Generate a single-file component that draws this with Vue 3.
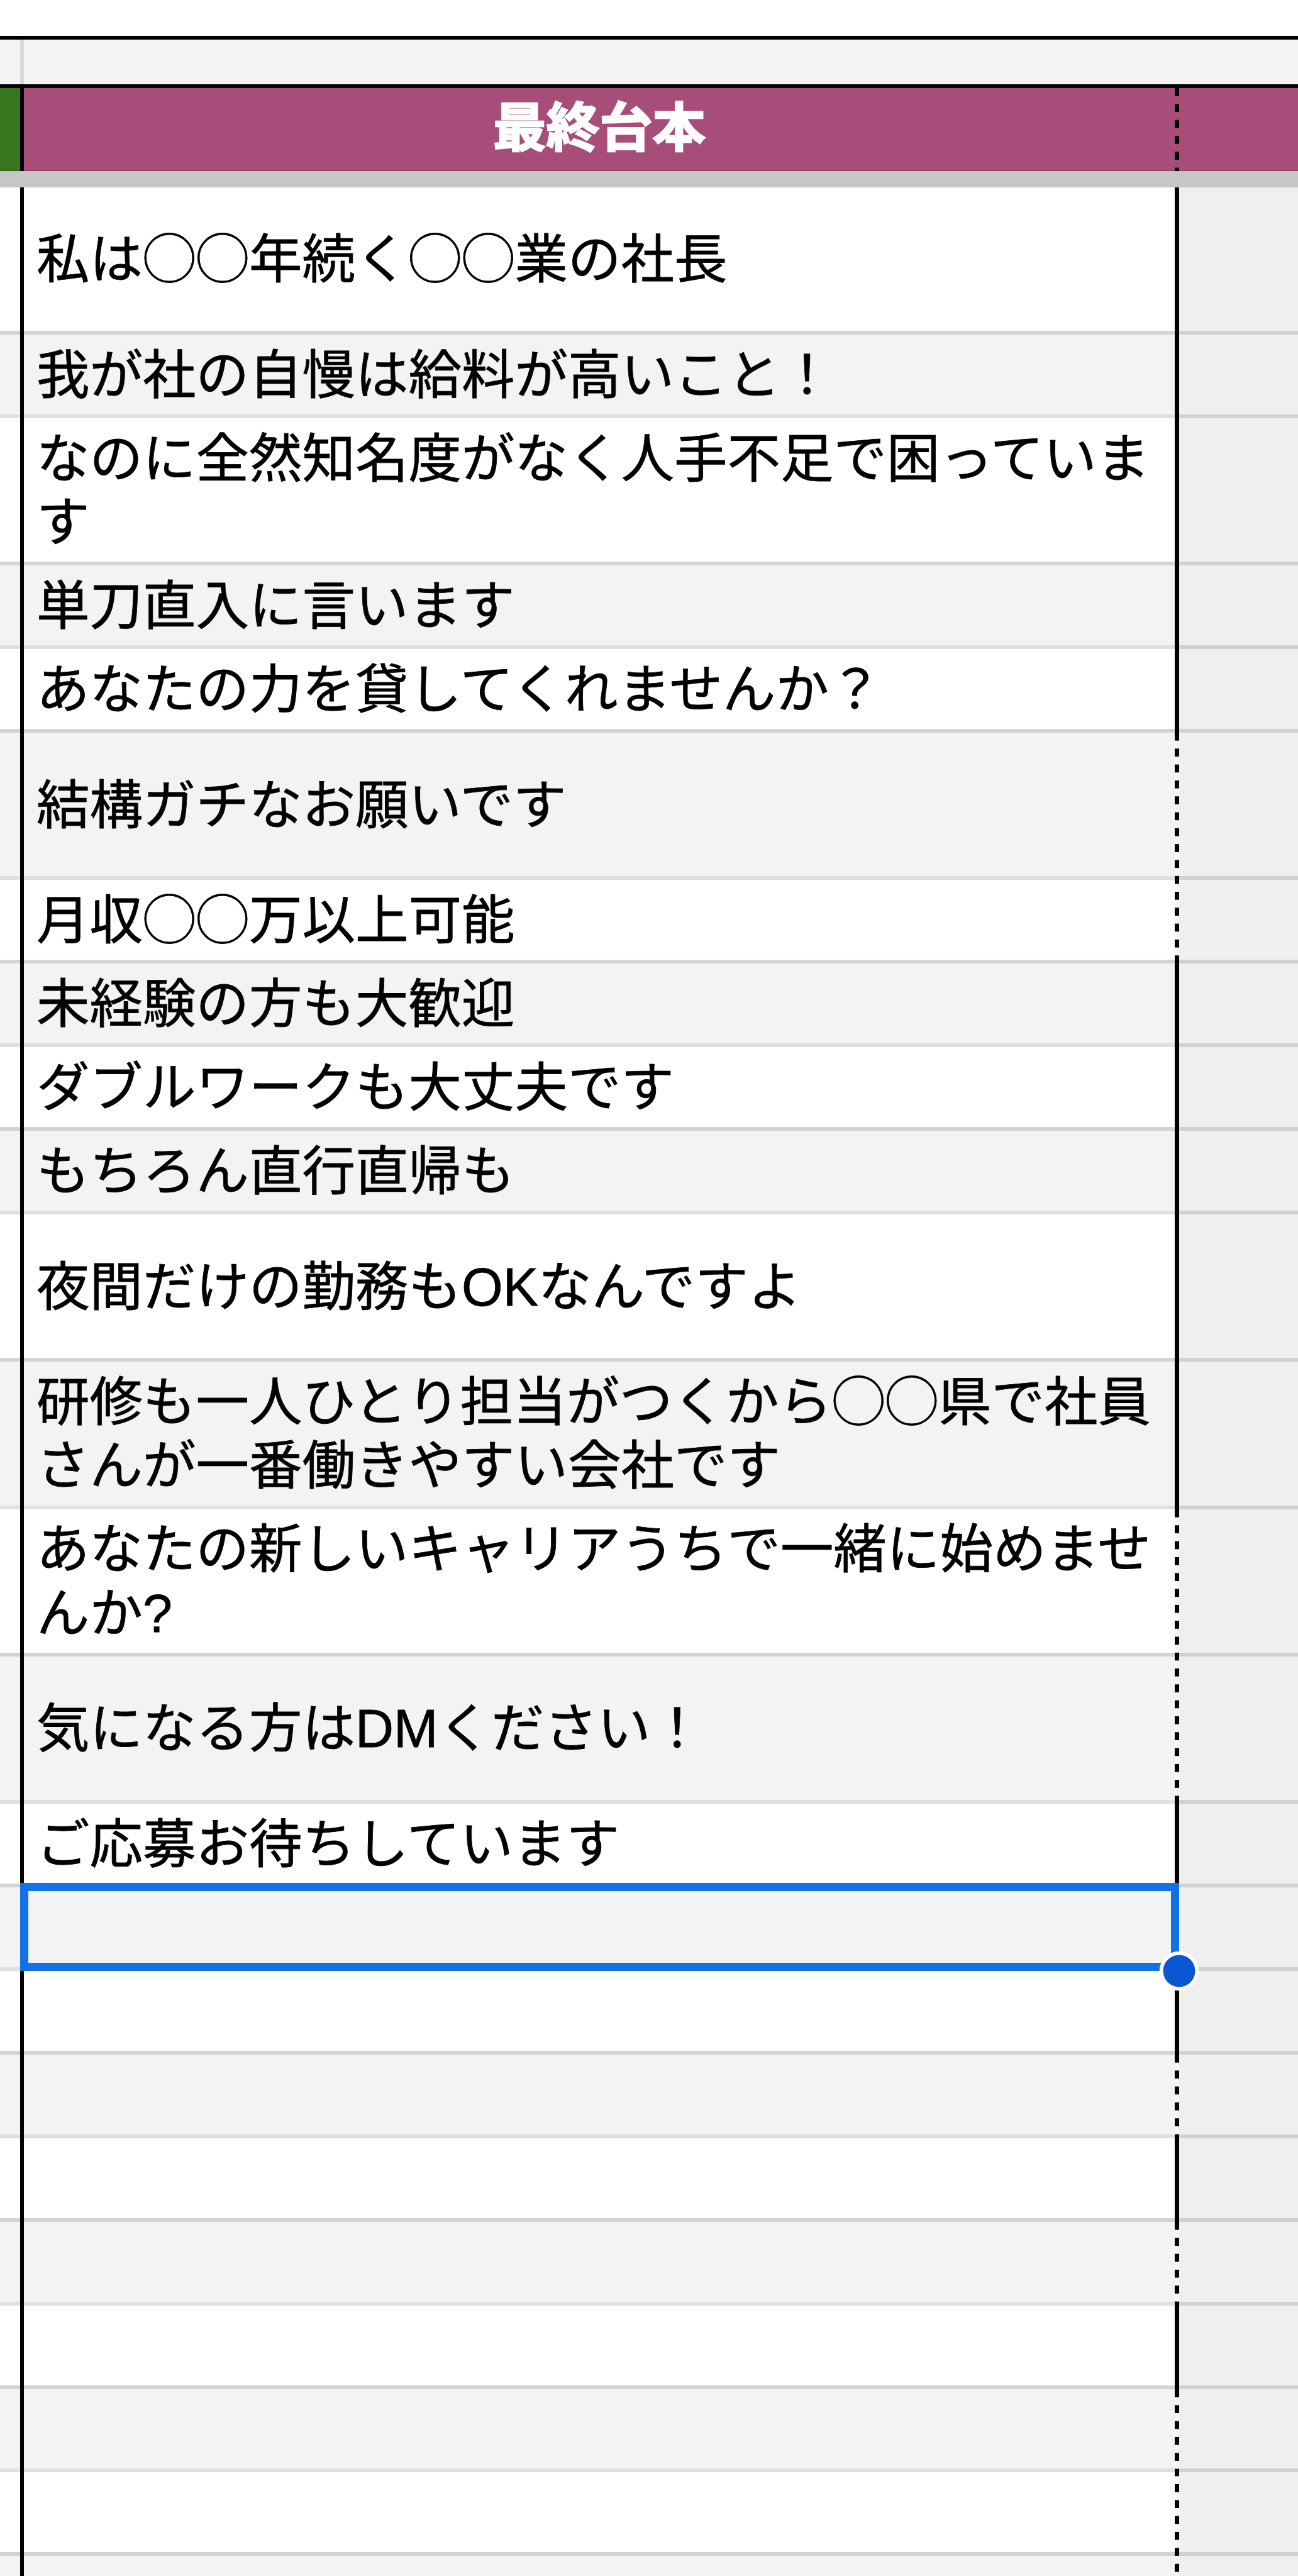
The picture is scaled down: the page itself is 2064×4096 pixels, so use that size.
<script setup>
import { computed } from "vue";

const SHORT = 21;
const TALL = 37;

/** h is in sheet units; dot marks a dotted right border instead of a solid one. */
const cells = [
  { h: TALL, text: "私は◯◯年続く◯◯業の社長" },
  { h: SHORT, text: "我が社の自慢は給料が高いこと！" },
  { h: TALL, text: "なのに全然知名度がなく人手不足で困っていま\nす" },
  { h: SHORT, text: "単刀直入に言います" },
  { h: SHORT, text: "あなたの力を貸してくれませんか？" },
  { h: TALL, text: "結構ガチなお願いです", dot: true },
  { h: SHORT, text: "月収◯◯万以上可能", dot: true },
  { h: SHORT, text: "未経験の方も大歓迎" },
  { h: SHORT, text: "ダブルワークも大丈夫です" },
  { h: SHORT, text: "もちろん直行直帰も" },
  { h: TALL, text: "夜間だけの勤務もOKなんですよ" },
  { h: TALL, text: "研修も一人ひとり担当がつくから◯◯県で社員\nさんが一番働きやすい会社です" },
  { h: TALL, text: "あなたの新しいキャリアうちで一緒に始めませ\nんか?", dot: true },
  { h: TALL, text: "気になる方はDMください！", dot: true },
  { h: SHORT, text: "ご応募お待ちしています" },
  { h: SHORT, text: "", selected: true },
  { h: SHORT, text: "" },
  { h: SHORT, text: "", dot: true },
  { h: SHORT, text: "" },
  { h: SHORT, text: "", dot: true },
  { h: SHORT, text: "" },
  { h: SHORT, text: "", dot: true },
  { h: SHORT, text: "", dot: true },
  { h: SHORT, text: "", dot: true },
];

// dots run on unbroken over neighbouring rows, so each row keeps its phase
const rows = computed(() => {
  let run = 0;
  return cells.map((c) => {
    const phase = run % 4;
    run = c.dot ? run + c.h : 0;
    return { ...c, phase };
  });
});
</script>

<template>
  <div class="sheet">
    <div class="blank"></div>
    <div class="strip">
      <span class="side"></span>
      <span class="tick"></span>
    </div>
    <div class="row head">
      <div class="side"></div>
      <div class="line"></div>
      <div class="cell">最終台本</div>
      <div class="line dotted"></div>
      <div class="rest"></div>
    </div>
    <div class="freeze"></div>
    <div
      v-for="(row, i) in rows"
      :key="i"
      class="row"
      :class="{ tall: row.h === 37, band: i % 2 === 1 }"
    >
      <div class="side"></div>
      <div class="line"></div>
      <div class="cell">{{ row.text }}</div>
      <div class="line" :class="{ dotted: row.dot }" :style="{ '--phase': row.phase }"></div>
      <div class="rest"></div>
      <div v-if="row.selected" class="selection">
        <svg class="handle" viewBox="0 0 64 64">
          <circle cx="32" cy="32" r="31.3" fill="#fff" />
          <circle cx="32" cy="32" r="25.5" fill="#0b57d0" />
        </svg>
      </div>
    </div>
  </div>
</template>

<style>
body {
  margin: 0;
  background: #fff;
}
</style>

<style scoped>
.sheet {
  --u: 6.331px;
  width: 2064px;
  height: 4096px;
  overflow: hidden;
  background: #fff;
  color: #000;
  font-family: "Liberation Sans", "Noto Sans CJK JP", sans-serif;
  font-size: 84.5px;
  line-height: calc(var(--u) * 16);
}
.blank {
  height: 57.4px;
}
.strip {
  box-sizing: border-box;
  display: flex;
  height: 82.3px;
  border-top: 6px solid #000;
  border-bottom: 6px solid #000;
  background: #f3f3f3;
}
.strip .side {
  width: 32px;
}
.tick {
  width: 6px;
  background: #d9d9d9;
}
.row {
  position: relative;
  display: grid;
  grid-template-columns: 32px 6px 1830px 7px 1fr;
  height: calc(var(--u) * 21);
}
.row.tall {
  height: calc(var(--u) * 37);
}
.side,
.cell,
.rest {
  box-sizing: border-box;
}
.row .side,
.cell,
.rest {
  border-bottom: 6px solid #d3d3d3;
}
.cell {
  display: flex;
  align-items: center;
  padding: 4px 0 0 20px;
  white-space: pre;
  -webkit-text-stroke: 0.8px currentColor;
}
.band .side,
.band .cell {
  background: #f3f3f3;
  border-bottom-color: #dfdfdf;
}
.rest {
  background: #efefef;
  border-bottom-color: #d0d0d0;
}
.line {
  background: #000;
}
.line.dotted {
  background: repeating-linear-gradient(
    #000 0 calc(var(--u) * 2),
    #f7f7f7 calc(var(--u) * 2) calc(var(--u) * 4)
  );
  background-size: 100% calc(var(--u) * 4);
  background-position: 0 calc(var(--u) * var(--phase, 0) * -1);
}
.head {
  height: 132.8px;
}
.head .side {
  background: #38761d;
  border-bottom: 2px solid #33661c;
}
.head .cell {
  justify-content: center;
  padding: 0;
  color: #fff;
  font-weight: 700;
  -webkit-text-stroke: 2.5px currentColor;
}
.head .cell,
.head .rest {
  background: #a64d79;
  border-bottom: 2px solid #8d446a;
}
.head .line.dotted {
  background-image: repeating-linear-gradient(
    #000 0 calc(var(--u) * 2),
    #a64d79 calc(var(--u) * 2) calc(var(--u) * 4)
  );
}
.freeze {
  height: 25.3px;
  background: #c6c6c6;
}
.selection {
  position: absolute;
  z-index: 1;
  box-sizing: border-box;
  top: -7px;
  bottom: 0;
  left: 32px;
  width: 1843px;
  border: 13px solid #1371e8;
}
.handle {
  position: absolute;
  right: -45px;
  bottom: -45px;
  width: 64px;
  height: 64px;
}
</style>
